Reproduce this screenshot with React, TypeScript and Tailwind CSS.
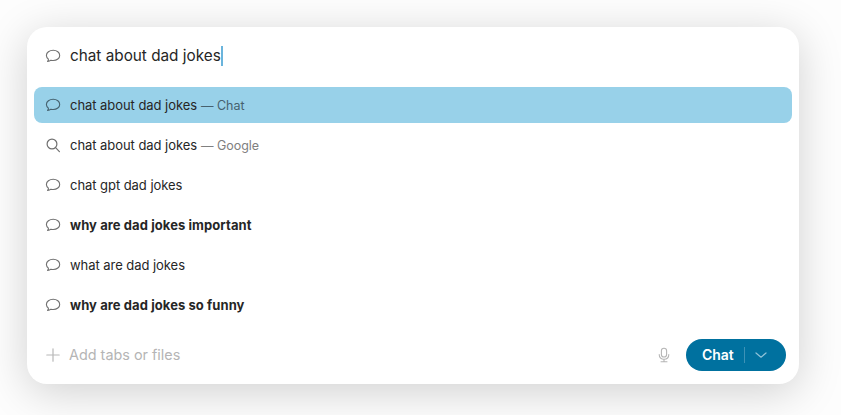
import React from 'react'

const BubbleIcon = ({ className = '' }: { className?: string }) => (
  <svg width="16" height="16" viewBox="0 0 16 16" fill="none" className={className}>
    <path
      d="M8.2 2.3c3.7 0 6.5 2.2 6.5 5.1s-2.8 5.1-6.5 5.1c-.8 0-1.6-.1-2.3-.3-.8.7-1.9 1.1-3.3 1.2.5-.6.8-1.4.8-2.2C2.2 10 1.4 8.8 1.4 7.4c0-2.9 3.1-5.1 6.8-5.1Z"
      stroke="currentColor"
      strokeWidth="1.1"
      strokeLinejoin="round"
    />
  </svg>
)

const SearchIcon = () => (
  <svg width="16" height="16" viewBox="0 0 16 16" fill="none" className="text-[#707070]">
    <circle cx="7" cy="7" r="4.9" stroke="currentColor" strokeWidth="1.2" />
    <path d="M10.6 10.6 14.4 14.6" stroke="currentColor" strokeWidth="1.2" strokeLinecap="round" />
  </svg>
)

const rows = [
  { text: 'chat about dad jokes', suffix: '— Chat', active: true },
  { text: 'chat about dad jokes', suffix: '— Google', search: true },
  { text: 'chat gpt dad jokes' },
  { text: 'why are dad jokes important', bold: true },
  { text: 'what are dad jokes' },
  { text: 'why are dad jokes so funny', bold: true },
]

const App = () => {
  return (
    <div className="w-[841px] h-[415px] overflow-hidden bg-[#fdfdfd] pt-[27px] pl-[27px] font-['Inter',sans-serif]">
      <div className="w-[772px] h-[357px] bg-white rounded-[20px] shadow-[0_8px_44px_rgba(0,0,0,0.18)] flex flex-col">
        <div className="h-[60px] flex items-center pl-[18px] pb-[2px] shrink-0">
          <BubbleIcon className="text-[#707070]" />
          <div className="ml-[9px] flex items-center text-[15.3px] leading-[20px] text-[#262626]">
            chat about dad jokes
            <span className="w-[2px] h-[20px] bg-[#6ab4dc]" />
          </div>
        </div>

        <div className="flex flex-col gap-1 px-[7px]">
          {rows.map((row, i) => (
            <div
              key={i}
              className={`h-9 flex items-center pl-[11px] rounded-lg ${row.active ? 'bg-[#98d1e9]' : ''}`}
            >
              {row.search ? <SearchIcon /> : <BubbleIcon className={row.active ? 'text-[#46626f]' : 'text-[#707070]'} />}
              <span className={`ml-[9px] text-[13px] leading-4 text-[#262626] ${row.bold ? 'font-bold tracking-[0.08px]' : 'tracking-[-0.05px]'}`}>
                {row.text}
                {row.suffix && (
                  <span className={`ml-1 text-[12.5px] ${row.active ? 'text-[#46616e]' : 'text-[#808080]'}`}>
                    {row.suffix}
                  </span>
                )}
              </span>
            </div>
          ))}
        </div>

        <div className="flex items-center mt-4 pl-[18px] pr-[13px]">
          <svg width="16" height="16" viewBox="0 0 16 16" fill="none" className="text-[#b8b8b8]">
            <path d="M8 1.8v12.4M1.8 8h12.4" stroke="currentColor" strokeWidth="1.2" strokeLinecap="round" />
          </svg>
          <span className="ml-2 text-[14.4px] leading-4 text-[#b5b5b5]">Add tabs or files</span>
          <svg width="16" height="16" viewBox="0 0 16 16" fill="none" className="ml-auto mr-[14px] text-[#b5b5b5]">
            <rect x="5.4" y="1.2" width="5.2" height="8.8" rx="2.6" stroke="currentColor" strokeWidth="1.1" />
            <path d="M3.2 7.6c0 2.8 2 4.7 4.8 4.7s4.8-1.9 4.8-4.7M8 12.3v2.2M5 14.7h6" stroke="currentColor" strokeWidth="1.1" strokeLinecap="round" />
          </svg>
          <div className="w-[100px] h-8 rounded-2xl bg-[#00719f] flex items-center text-white">
            <span className="ml-4 text-[14px] font-semibold leading-4 tracking-[-0.05px]">Chat</span>
            <span className="ml-[10px] w-[1px] h-4 bg-[#3d92b6]" />
            <svg width="14" height="14" viewBox="0 0 14 14" fill="none" className="ml-[9px] text-[#8fc3d9]">
              <path d="M2 5l5 4.2L12 5" stroke="currentColor" strokeWidth="1.2" strokeLinecap="round" strokeLinejoin="round" />
            </svg>
          </div>
        </div>
      </div>
    </div>
  )
}

export default App
